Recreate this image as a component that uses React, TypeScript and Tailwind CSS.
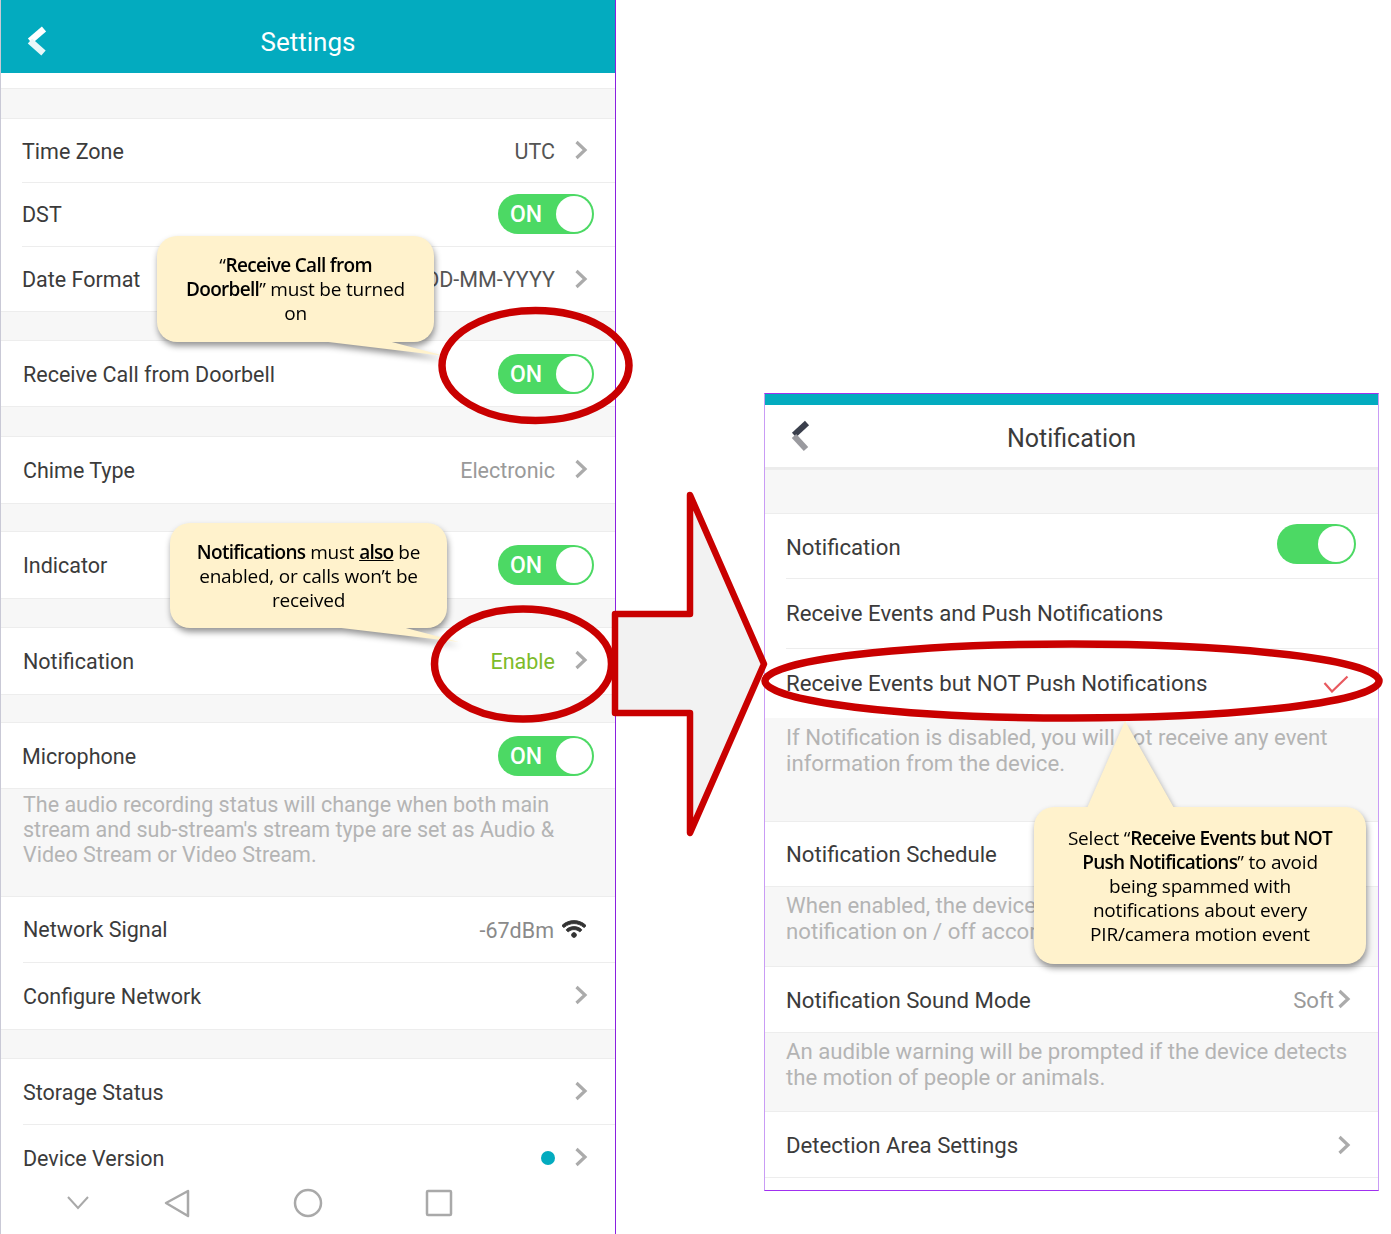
import React from "react";
import { FaWifi } from "react-icons/fa";

const Chevron = ({ up }: { up?: boolean }) => (
  <svg className={`w-[14px] h-[20px] shrink-0 ${up ? "mb-[2px]" : ""}`} viewBox="0 0 14 20" fill="none">
    <path d="M2.5 2 L11 10 L2.5 18" stroke="#ababab" strokeWidth="3.2" />
  </svg>
);

const Toggle = ({ up }: { up?: boolean }) => (
  <div className={`relative w-[96px] h-[40px] rounded-full bg-[#4cd964] flex items-center pl-[12px] pt-[1px] shrink-0 ${up ? "mb-[2px]" : ""}`}>
    <span className="text-white text-[23px] font-medium leading-none">ON</span>
    <div className="absolute right-[2px] top-[2px] w-[36px] h-[36px] rounded-full bg-white" />
  </div>
);

const Row = ({
  label,
  h,
  last,
  wide,
  shift = "",
  children,
}: {
  label: string;
  h: string;
  last?: boolean;
  wide?: boolean;
  shift?: string;
  children?: React.ReactNode;
}) => (
  <div className={`${h} shrink-0 bg-white ${wide ? "pl-[22px]" : "pl-[21px]"}`}>
    <div className={`h-full flex items-center justify-between ${last ? "" : "border-b border-[#ededed]"}`}>
      <span className={`text-[#3b3b3b] ${shift}`}>{label}</span>
      {children}
    </div>
  </div>
);

const Gap = ({ h }: { h: string }) => <div className={`${h} shrink-0 bg-[#f7f7f7] border-y border-[#ededed]`} />;

const Note = ({ h, children }: { h: string; children: React.ReactNode }) => (
  <div className={`${h} shrink-0 bg-[#f7f7f7] border-b border-[#ededed] px-[21px] leading-[26px] text-[#b4b4b4]`}>
    {children}
  </div>
);

const Value = ({ text, color, shift = "", up }: { text: string; color: string; shift?: string; up?: boolean }) => (
  <div className="flex items-center pr-[27px]">
    <span className={`${color} ${shift} mr-[19px]`}>{text}</span>
    <Chevron up={up} />
  </div>
);

const Callout = ({
  pos,
  tail,
  children,
}: {
  pos: string;
  tail: string;
  children: React.ReactNode;
}) => (
  <div className={`absolute ${pos} drop-shadow-[1px_4px_3px_rgba(0,0,0,0.42)]`}>
    <svg className="absolute left-0 top-0 w-full h-full overflow-visible">
      <polygon points={tail} fill="#fff2cc" />
    </svg>
    <div
      className="relative h-full bg-[#fff2cc] rounded-[20px] flex flex-col items-center justify-center text-center text-black text-[19px] leading-[24px] tracking-[-0.2px]"
      style={{ fontFamily: '"Open Sans", sans-serif' }}
    >
      {children}
    </div>
  </div>
);

const B = ({ children, u }: { children: React.ReactNode; u?: boolean }) => (
  <b className={`font-semibold tracking-[-0.7px] ${u ? "underline" : ""}`}>{children}</b>
);

export default function App() {
  return (
    <div className="relative w-[1391px] h-[1234px] overflow-hidden bg-white flex items-start" style={{ fontFamily: "Roboto, sans-serif" }}>
      {/* Settings phone */}
      <div className="w-[616px] h-[1234px] shrink-0 flex flex-col overflow-hidden text-[21.5px] border-l border-l-[#c9c9d6] border-r border-r-[#8a20e0]">
        <div className="relative h-[73px] shrink-0 bg-[#03abbf] flex items-center justify-center pt-[12px]">
          <svg className="absolute left-[23px] top-[25px] w-[24px] h-[32px]" viewBox="0 0 24 32" fill="none">
            <path d="M20 4 L6 16" stroke="#ffffff" strokeWidth="6.5" />
            <path d="M6 16 L19.5 28" stroke="#e8f7f9" strokeWidth="6.5" />
          </svg>
          <span className="text-[26px] text-white">Settings</span>
        </div>
        <div className="h-[15px] shrink-0 bg-white" />
        <Gap h="h-[31px]" />
        <Row label="Time Zone" h="h-[64px]" shift="pt-[4px]"><Value text="UTC" color="text-[#555555]" shift="pt-[4px]" up /></Row>
        <Row label="DST" h="h-[64px]" shift="pt-[2px]"><div className="pr-[21px]"><Toggle up /></div></Row>
        <Row label="Date Format" h="h-[64px]" last shift="pt-[2px]"><Value text="DD-MM-YYYY" color="text-[#555555]" shift="pt-[2px]" /></Row>
        <Gap h="h-[30px]" />
        <Row label="Receive Call from Doorbell" h="h-[65px]" last wide shift="pt-[4px]"><div className="pr-[21px]"><Toggle /></div></Row>
        <Gap h="h-[31px]" />
        <Row label="Chime Type" h="h-[66px]" last wide shift="pt-[2px]"><Value text="Electronic" color="text-[#9a9a9a]" shift="pt-[2px]" up /></Row>
        <Gap h="h-[29px]" />
        <Row label="Indicator" h="h-[66px]" last wide shift="pt-[2px]"><div className="pr-[21px]"><Toggle /></div></Row>
        <Gap h="h-[30px]" />
        <Row label="Notification" h="h-[66px]" last wide shift="pt-[2px]"><Value text="Enable" color="text-[#7dbb2a]" shift="pt-[2px]" up /></Row>
        <Gap h="h-[29px]" />
        <Row label="Microphone" h="h-[65px]" last shift="pt-[4px]"><div className="pr-[21px]"><Toggle /></div></Row>
        <div className="h-[109px] shrink-0 bg-[#f7f7f7] border-y border-[#ededed] pl-[22px] pr-[20px] pt-[3px] leading-[25px] text-[#b4b4b4]">
          The audio recording status will change when both main stream and sub-stream's stream type are set as Audio &amp; Video Stream or Video Stream.
        </div>
        <Row label="Network Signal" h="h-[66px]" wide shift="pt-[2px]">
          <div className="flex items-center pr-[29px]">
            <span className="text-[#8a8a8a] pt-[4px] mr-[8px]">-67dBm</span>
            <FaWifi className="text-[#333333] text-[24px] mb-[2px]" stroke="currentColor" strokeWidth={24} />
          </div>
        </Row>
        <Row label="Configure Network" h="h-[66px]" last wide shift="pt-[2px]"><Value text="" color="" up /></Row>
        <Gap h="h-[30px]" />
        <Row label="Storage Status" h="h-[66px]" wide shift="pt-[4px]"><Value text="" color="" up /></Row>
        <div className="flex-1 min-h-0 overflow-hidden">
          <Row label="Device Version" h="h-[66px]" last wide shift="pt-[2px]">
            <div className="flex items-center pr-[27px]">
              <div className="w-[14px] h-[14px] rounded-full bg-[#03abbf] mr-[19px]" />
              <Chevron up />
            </div>
          </Row>
        </div>
        <div className="h-[62px] shrink-0 bg-white">
          <svg className="w-full h-full" viewBox="0 0 614 62" fill="none" stroke="#a9a9a9" strokeWidth="2.5">
            <path d="M67 25 L77 36 L87 25" strokeWidth="2" />
            <path d="M187 19 L165 31 L187 44 Z" strokeLinejoin="round" />
            <circle cx="307" cy="31" r="13" />
            <rect x="426" y="19" width="24" height="24" rx="1" />
          </svg>
        </div>
      </div>

      {/* Notification phone */}
      <div className="w-[615px] h-[798px] shrink-0 ml-[148px] mt-[393px] flex flex-col overflow-hidden text-[22.2px] border-x border-x-[#c99cf5] border-y border-y-[#a030f0]">
        <div className="h-[11px] shrink-0 bg-[#03abbf]" />
        <div className="relative h-[64px] shrink-0 bg-white border-b-2 border-[#ececec] flex items-center justify-center pt-[6px]">
          <svg className="absolute left-[23px] top-[15px] w-[22px] h-[32px]" viewBox="0 0 22 32" fill="none">
            <path d="M19 3 L6 15" stroke="#3a3f4c" strokeWidth="6" />
            <path d="M6 16 L18 29" stroke="#9a9a9f" strokeWidth="6" />
          </svg>
          <span className="text-[25px] text-[#3b3b3b]">Notification</span>
        </div>
        <Gap h="h-[45px]" />
        <Row label="Notification" h="h-[65px]" shift="pt-[4px]">
          <div className="relative w-[79px] h-[40px] rounded-full bg-[#4cd964] mr-[22px] mb-[4px]">
            <div className="absolute right-[2px] top-[2px] w-[36px] h-[36px] rounded-full bg-white" />
          </div>
        </Row>
        <Row label="Receive Events and Push Notifications" h="h-[70px]" />
        <Row label="Receive Events but NOT Push Notifications" h="h-[69px]" last>
          <svg className="w-[26px] h-[18px] mr-[29px]" viewBox="0 0 26 18" fill="none">
            <path d="M1.5 8 L9 16.5 L24.5 1.5" stroke="#e8595f" strokeWidth="2.2" />
          </svg>
        </Row>
        <Note h="h-[104px] pt-[6px]">If Notification is disabled, you will not receive any event information from the device.</Note>
        <Row label="Notification Schedule" h="h-[64px]" last shift="pt-[2px]" />
        <Note h="h-[81px] border-t pt-[5px]">
          When enabled, the device will turn<br />notification on / off according to the schedule.
        </Note>
        <Row label="Notification Sound Mode" h="h-[65px]" last shift="pt-[2px]">
          <div className="flex items-center pr-[27px]">
            <span className="text-[#9a9a9a] pt-[2px] mr-[3px]">Soft</span>
            <Chevron />
          </div>
        </Row>
        <Note h="h-[80px] border-t pt-[5px]">An audible warning will be prompted if the device detects the motion of people or animals.</Note>
        <Row label="Detection Area Settings" h="h-[65px]" last shift="pt-[2px]"><Value text="" color="" /></Row>
        <div className="flex-1 border-t border-[#ededed]" />
      </div>

      {/* Callouts */}
      <Callout pos="left-[157px] top-[236px] w-[277px] h-[106px]" tail="163,105 231,105 288,120">
        <div>“<B>Receive Call from</B></div>
        <div><B>Doorbell</B>” must be turned</div>
        <div>on</div>
      </Callout>
      <Callout pos="left-[170px] top-[523px] w-[277px] h-[105px]" tail="163,104 232,104 289,119">
        <div><B>Notifications</B> must <B u>also</B> be</div>
        <div>enabled, or calls won’t be</div>
        <div>received</div>
      </Callout>
      <Callout pos="left-[1034px] top-[807px] w-[332px] h-[157px]" tail="53,1 91,-86 140,1">
        <div>Select “<B>Receive Events but NOT</B></div>
        <div><B>Push Notifications</B>” to avoid</div>
        <div>being spammed with</div>
        <div>notifications about every</div>
        <div>PIR/camera motion event</div>
      </Callout>

      {/* Annotation drawing */}
      <svg className="absolute left-0 top-0 w-[1391px] h-[1234px] pointer-events-none" viewBox="0 0 1391 1234" fill="none">
        <ellipse cx="535.5" cy="365.5" rx="93.5" ry="55" stroke="#c90000" strokeWidth="7.5" />
        <ellipse cx="523" cy="664" rx="88.5" ry="55" stroke="#c90000" strokeWidth="7.5" />
        <ellipse cx="1072" cy="681" rx="307" ry="37" stroke="#c90000" strokeWidth="7.5" />
        <polygon points="690,495 764,664 690,833 690,713 615,713 615,614 690,614" fill="#f2f2f2" stroke="#c90000" strokeWidth="6.5" strokeLinejoin="round" />
      </svg>
    </div>
  );
}
